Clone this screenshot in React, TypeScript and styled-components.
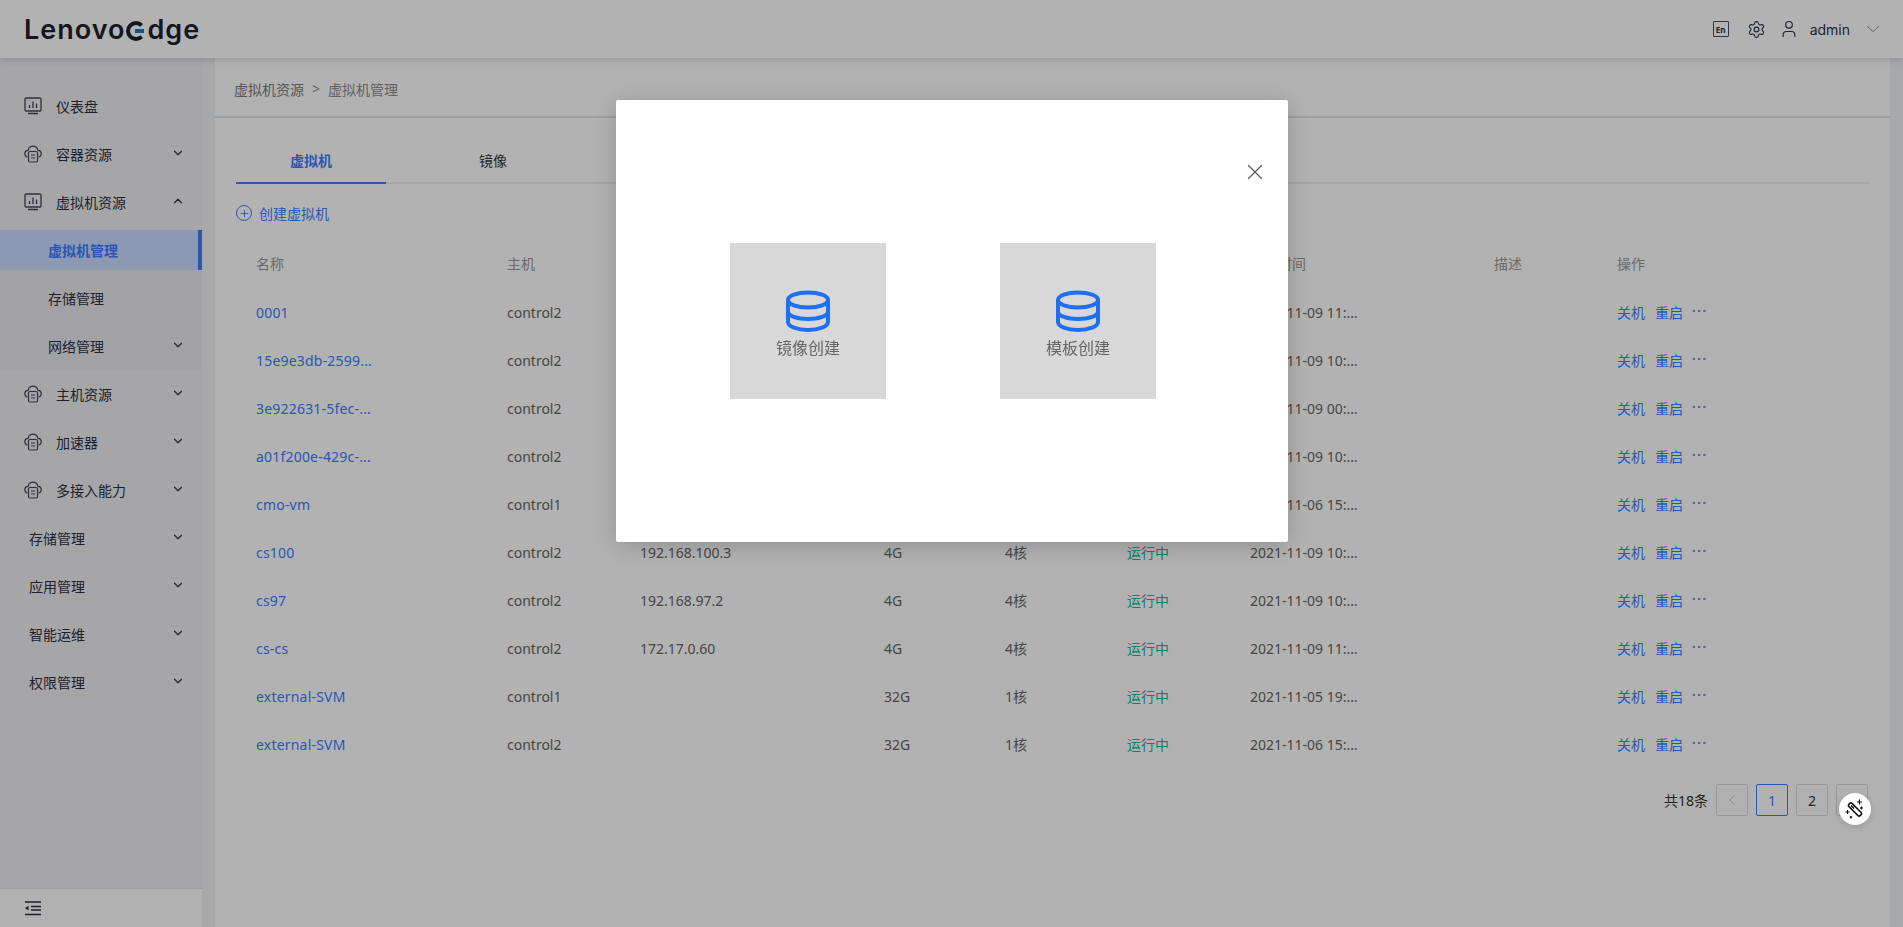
import React from "react";
import styled, { createGlobalStyle } from "styled-components";
import {
  ChevronDown,
  ChevronUp,
  ChevronLeft,
  ChevronRight,
  Settings,
  User,
  Plus,
  X,
  MoreHorizontal,
} from "lucide-react";

const GlobalStyle = createGlobalStyle`
  html, body { margin: 0; padding: 0; height: 100%; }
  body {
    font-family: "Noto Sans", "Noto Sans CJK SC", sans-serif;
    font-size: 14px;
    background: #f0f1f4;
    overflow: hidden;
  }
  * { box-sizing: border-box; }
`;

const Page = styled.div`
  width: 1903px;
  height: 927px;
  display: flex;
  flex-direction: column;
  overflow: hidden;
`;

const Header = styled.header`
  height: 58px;
  flex: none;
  background: #fff;
  box-shadow: 0 2px 8px rgba(0, 0, 0, 0.15);
  display: flex;
  align-items: center;
  justify-content: space-between;
  padding: 0 19px 0 24px;
  position: relative;
  z-index: 2;
`;

const Logo = styled.div`
  display: flex;
  align-items: center;
  font-family: "Inter", sans-serif;
  font-weight: 600;
  font-size: 27px;
  letter-spacing: 1px;
  color: #1c1f2e;
`;

const LogoE = styled.span`
  width: 20px;
  height: 20px;
  border-radius: 50%;
  border: 4px solid #1c1f2e;
  border-right-color: transparent;
  margin: 3px 1px 0 1px;
  position: relative;

  &::after {
    content: "";
    position: absolute;
    left: 5px;
    top: 4px;
    width: 9px;
    height: 4px;
    background: #0f7fc8;
  }
`;

const HeaderTools = styled.div`
  display: flex;
  align-items: center;
  color: #2c3148;
`;

const LangIcon = styled.span`
  width: 16px;
  height: 16px;
  border: 1.5px solid #4a4f63;
  border-radius: 1px;
  font-size: 8px;
  font-weight: 700;
  display: flex;
  align-items: center;
  justify-content: center;
  margin-right: 18px;
`;

const UserIcon = styled(User)`
  margin-left: 13px;
`;

const UserName = styled.span`
  font-family: "Inter", sans-serif;
  font-size: 14px;
  margin: 0 12px 0 11px;
`;

const Body = styled.div`
  flex: 1;
  display: flex;
  min-height: 0;
`;

const Sidebar = styled.aside`
  width: 202px;
  flex: none;
  background: #eeeef2;
  display: flex;
  flex-direction: column;
  padding-top: 24px;
`;

const MenuList = styled.div`
  flex: 1;
`;

const SubMenu = styled.div`
  background: #e8e9ed;
`;

const MenuItem = styled.div<{ $indent: number; $active?: boolean }>`
  height: 48px;
  display: flex;
  align-items: center;
  padding-left: ${(p) => p.$indent}px;
  padding-right: 17px;
  color: ${(p) => (p.$active ? "#3b7dff" : "#2c3040")};
  font-weight: ${(p) => (p.$active ? 700 : 400)};
  position: relative;
  ${(p) =>
    p.$active &&
    `background: #c8dcff;
     height: 40px;
     margin: 4px 0;
     border-right: 4px solid #3b7dff;`}

  & > svg:last-child {
    margin-top: -3px;
  }
`;

const MenuLabel = styled.span`
  flex: 1;
`;

const MenuIconSlot = styled.svg`
  width: 18px;
  height: 18px;
  margin-right: 14px;
  margin-left: -1px;
  flex: none;
  color: #42465a;
`;

const Collapse = styled.div`
  height: 39px;
  flex: none;
  background: #fff;
  border-top: 1px solid #e2e3e8;
  padding-left: 24px;
  display: flex;
  align-items: center;
`;

const Main = styled.main`
  flex: 1;
  margin: 0 13px 0 13px;
  display: flex;
  flex-direction: column;
  min-width: 0;
`;

const Breadcrumb = styled.div`
  height: 60px;
  flex: none;
  background: #fff;
  border-bottom: 2px solid #e3e4ea;
  padding: 3px 0 0 19px;
  display: flex;
  align-items: center;
  gap: 8px;
  color: #8b8b8b;
`;

const CrumbParent = styled.span`
  color: #7c7c7c;
`;

const Content = styled.div`
  flex: 1;
  background: #fff;
  padding: 0 21px 0 21px;
`;

const Tabs = styled.div`
  height: 66px;
  display: flex;
  align-items: flex-end;
  gap: 32px;
  border-bottom: 2px solid #ececec;
`;

const Tab = styled.div<{ $active?: boolean }>`
  width: 150px;
  height: 40px;
  margin-bottom: -2px;
  padding-top: 7px;
  text-align: center;
  line-height: 20px;
  color: ${(p) => (p.$active ? "#3b7dff" : "#333")};
  font-weight: ${(p) => (p.$active ? 700 : 400)};
  border-bottom: 2px solid ${(p) => (p.$active ? "#3b7dff" : "transparent")};
`;

const CreateRow = styled.div`
  height: 58px;
  display: flex;
  align-items: center;
  gap: 7px;
  color: #3b7dff;
`;

const CreateIcon = styled.span`
  width: 16px;
  height: 16px;
  border: 1px solid #3b7dff;
  border-radius: 50%;
  display: flex;
  align-items: center;
  justify-content: center;
`;

const Table = styled.div`
  margin-top: -4px;
`;

const Row = styled.div<{ $head?: boolean }>`
  height: ${(p) => (p.$head ? 50 : 48)}px;
  display: grid;
  grid-template-columns: 251px 133px 244px 121px 122px 123px 244px 123px 1fr;
  padding-left: 20px;
  align-items: center;
  color: ${(p) => (p.$head ? "#999" : "#666")};
`;

const NameLink = styled.span`
  color: #3b7dff;
  letter-spacing: 0.2px;
`;

const Status = styled.span`
  color: #19b58f;
`;

const Actions = styled.span`
  display: flex;
  align-items: center;
  gap: 10px;
  color: #3b7dff;
`;

const MoreIcon = styled(MoreHorizontal)`
  margin-left: -3px;
  margin-top: -2px;
`;

const Pager = styled.div`
  display: flex;
  align-items: center;
  justify-content: flex-end;
  gap: 8px;
  margin: 16px 1px 0 0;
  color: #333;
`;

const PageButton = styled.span<{ $active?: boolean; $muted?: boolean }>`
  width: 32px;
  height: 32px;
  border: 1px solid ${(p) => (p.$active ? "#3b7dff" : "#d9d9d9")};
  border-radius: 2px;
  display: flex;
  align-items: center;
  justify-content: center;
  color: ${(p) => (p.$active ? "#3b7dff" : p.$muted ? "#bbb" : "#333")};
`;

const Overlay = styled.div`
  position: fixed;
  inset: 0;
  background: rgba(0, 0, 0, 0.3);
  z-index: 10;
`;

const Modal = styled.div`
  position: absolute;
  left: 616px;
  top: 100px;
  width: 672px;
  height: 442px;
  background: #fff;
  border-radius: 2px;
  box-shadow: 0 4px 24px rgba(0, 0, 0, 0.2);
  padding: 143px 0 0 114px;
  display: flex;
  gap: 114px;
  align-items: flex-start;
`;

const CloseButton = styled.span`
  position: absolute;
  top: 59px;
  right: 20px;
  color: #55565c;
  display: flex;
`;

const CreateCard = styled.div`
  width: 156px;
  height: 156px;
  background: #d8d8d8;
  color: #666;
  font-size: 16px;
  line-height: 22px;
  display: flex;
  flex-direction: column;
  align-items: center;
  padding-top: 47px;
`;

const DbIcon = styled.svg`
  width: 46px;
  height: 43px;
  margin-bottom: 4px;
`;

const FloatButton = styled.div`
  position: absolute;
  left: 1839px;
  top: 793px;
  width: 32px;
  height: 32px;
  border-radius: 50%;
  background: #fff;
  box-shadow: 0 2px 8px rgba(0, 0, 0, 0.15);
  display: flex;
  align-items: center;
  justify-content: center;
`;

const ChartIcon = () => (
  <MenuIconSlot viewBox="0 0 18 18" fill="none" stroke="currentColor" strokeWidth="1.3">
    <rect x="1" y="1" width="16" height="13" rx="1" />
    <path d="M4 16.5h10M5.5 11V8M9 11V4.5M12.5 11V6.5" />
  </MenuIconSlot>
);

const CloudIcon = () => (
  <MenuIconSlot viewBox="0 0 18 18" fill="none" stroke="currentColor" strokeWidth="1.2">
    <path d="M3.5 12.2C1.8 11.6.8 10.3.8 8.8c0-1.9 1.4-3.3 3.2-3.4C4.6 3 6.6 1.2 9 1.2s4.4 1.8 5 4.2c1.8.1 3.2 1.5 3.2 3.4 0 1.5-1 2.8-2.7 3.4" />
    <rect x="4.5" y="6.5" width="9" height="10.5" rx="1.5" fill="#eeeef2" />
    <path d="M7 10h4M7 13h4" />
  </MenuIconSlot>
);

const Database = () => (
  <DbIcon viewBox="0 0 46 43" fill="none" stroke="#1f6ff2" strokeWidth="4">
    <ellipse cx="23" cy="10" rx="20" ry="7.5" />
    <path d="M3 10v22c0 4.5 9 8 20 8s20-3.5 20-8V10" />
    <path d="M3 21.5c0 4.5 9 7.5 20 7.5s20-3 20-7.5" />
  </DbIcon>
);

const CollapseIcon = () => (
  <svg width="18" height="16" viewBox="0 0 18 16" fill="none" stroke="#2c3040" strokeWidth="1.5">
    <path d="M1 2h16M7 6.5h10M7 10h10M1 14.5h16" />
    <path d="M1 8.2l3.5-2.4v4.8z" fill="#2c3040" stroke="none" />
  </svg>
);

const WandIcon = () => (
  <svg width="22" height="22" viewBox="0 0 22 22" fill="none" stroke="#111" strokeWidth="1.6">
    <rect x="-2.2" y="-8" width="4.4" height="16" rx="1.5" transform="translate(11 11.5) rotate(-45)" />
    <path d="M7 7.5l3 3" />
    <path d="M15.5 1.5v5M13 4h5M3.5 12v4M1.5 14h4M17.5 8.5v3M16 10h3M7 18v2.5M5.8 19.2h2.4" strokeWidth="1.2" />
  </svg>
);

type RowData = [string, string, string, string, string, string];

const rows: RowData[] = [
  ["0001", "control2", "", "", "", "2021-11-09 11:..."],
  ["15e9e3db-2599...", "control2", "", "", "", "2021-11-09 10:..."],
  ["3e922631-5fec-...", "control2", "", "", "", "2021-11-09 00:..."],
  ["a01f200e-429c-...", "control2", "", "", "", "2021-11-09 10:..."],
  ["cmo-vm", "control1", "", "", "", "2021-11-06 15:..."],
  ["cs100", "control2", "192.168.100.3", "4G", "4核", "2021-11-09 10:..."],
  ["cs97", "control2", "192.168.97.2", "4G", "4核", "2021-11-09 10:..."],
  ["cs-cs", "control2", "172.17.0.60", "4G", "4核", "2021-11-09 11:..."],
  ["external-SVM", "control1", "", "32G", "1核", "2021-11-05 19:..."],
  ["external-SVM", "control2", "", "32G", "1核", "2021-11-06 15:..."],
];

const App = () => {
  return (
    <Page>
      <GlobalStyle />
      <Header>
        <Logo>
          Lenovo
          <LogoE />
          dge
        </Logo>
        <HeaderTools>
          <LangIcon>En</LangIcon>
          <Settings size={19} strokeWidth={1.4} />
          <UserIcon size={20} strokeWidth={1.4} />
          <UserName>admin</UserName>
          <ChevronDown size={22} strokeWidth={1} color="#888" />
        </HeaderTools>
      </Header>
      <Body>
        <Sidebar>
          <MenuList>
            <MenuItem $indent={25}>
              <ChartIcon />
              <MenuLabel>仪表盘</MenuLabel>
            </MenuItem>
            <MenuItem $indent={25}>
              <CloudIcon />
              <MenuLabel>容器资源</MenuLabel>
              <ChevronDown size={14} />
            </MenuItem>
            <MenuItem $indent={25}>
              <ChartIcon />
              <MenuLabel>虚拟机资源</MenuLabel>
              <ChevronUp size={14} />
            </MenuItem>
            <SubMenu>
              <MenuItem $indent={48} $active>
                <MenuLabel>虚拟机管理</MenuLabel>
              </MenuItem>
              <MenuItem $indent={48}>
                <MenuLabel>存储管理</MenuLabel>
              </MenuItem>
              <MenuItem $indent={48}>
                <MenuLabel>网络管理</MenuLabel>
                <ChevronDown size={14} />
              </MenuItem>
            </SubMenu>
            {["主机资源", "加速器", "多接入能力"].map((label) => (
              <MenuItem $indent={25} key={label}>
                <CloudIcon />
                <MenuLabel>{label}</MenuLabel>
                <ChevronDown size={14} />
              </MenuItem>
            ))}
            {["存储管理", "应用管理", "智能运维", "权限管理"].map((label) => (
              <MenuItem $indent={29} key={label}>
                <MenuLabel>{label}</MenuLabel>
                <ChevronDown size={14} />
              </MenuItem>
            ))}
          </MenuList>
          <Collapse>
            <CollapseIcon />
          </Collapse>
        </Sidebar>
        <Main>
          <Breadcrumb>
            <CrumbParent>虚拟机资源</CrumbParent>
            <span>&gt;</span>
            <span>虚拟机管理</span>
          </Breadcrumb>
          <Content>
            <Tabs>
              <Tab $active>虚拟机</Tab>
              <Tab>镜像</Tab>
            </Tabs>
            <CreateRow>
              <CreateIcon>
                <Plus size={11} strokeWidth={2} />
              </CreateIcon>
              创建虚拟机
            </CreateRow>
            <Table>
              <Row $head>
                <span>名称</span>
                <span>主机</span>
                <span>IP</span>
                <span>内存</span>
                <span>CPU</span>
                <span>状态</span>
                <span>创建时间</span>
                <span>描述</span>
                <span>操作</span>
              </Row>
              {rows.map((r, i) => (
                <Row key={i}>
                  <NameLink>{r[0]}</NameLink>
                  <span>{r[1]}</span>
                  <span>{r[2]}</span>
                  <span>{r[3]}</span>
                  <span>{r[4]}</span>
                  <Status>运行中</Status>
                  <span>{r[5]}</span>
                  <span />
                  <Actions>
                    <span>关机</span>
                    <span>重启</span>
                    <MoreIcon size={18} strokeWidth={1.2} />
                  </Actions>
                </Row>
              ))}
            </Table>
            <Pager>
              <span>共18条</span>
              <PageButton $muted>
                <ChevronLeft size={18} strokeWidth={1.2} />
              </PageButton>
              <PageButton $active>1</PageButton>
              <PageButton>2</PageButton>
              <PageButton>
                <ChevronRight size={18} strokeWidth={1.2} />
              </PageButton>
            </Pager>
          </Content>
        </Main>
      </Body>
      <Overlay>
        <Modal>
          <CloseButton>
            <X size={26} strokeWidth={1.1} />
          </CloseButton>
          <CreateCard>
            <Database />
            镜像创建
          </CreateCard>
          <CreateCard>
            <Database />
            模板创建
          </CreateCard>
        </Modal>
        <FloatButton>
          <WandIcon />
        </FloatButton>
      </Overlay>
    </Page>
  );
};

export default App;
